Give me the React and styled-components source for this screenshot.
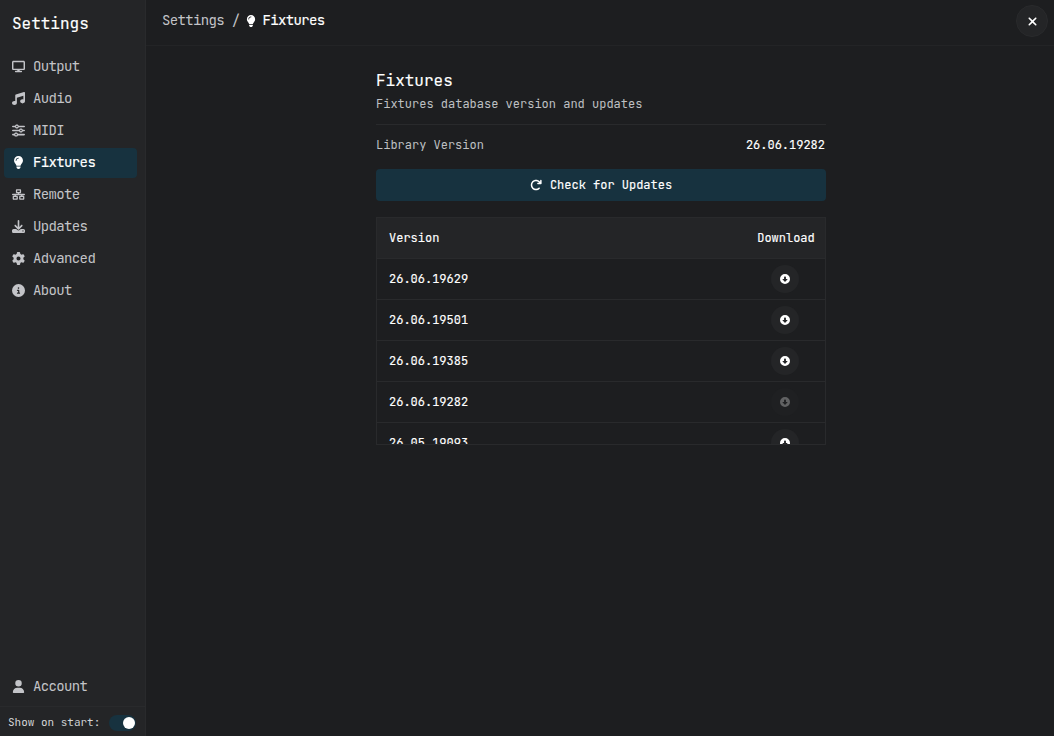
import React from 'react';
import styled, { createGlobalStyle } from 'styled-components';
import {
  FaDisplay, FaMusic, FaSliders, FaLightbulb, FaNetworkWired, FaDownload,
  FaGear, FaCircleInfo, FaUser, FaXmark, FaArrowRotateRight, FaCircleDown,
} from 'react-icons/fa6';

const GlobalStyle = createGlobalStyle`
  * { box-sizing: border-box; }
  body {
    margin: 0;
    background: #1d1e20;
    color: #fff;
    font-family: "JetBrains Mono", "DejaVu Sans Mono", "Liberation Mono", monospace;
    font-size: 12px;
    letter-spacing: -0.01px;
  }
  button { font: inherit; letter-spacing: inherit; color: inherit; border: 0; padding: 0; }
  svg { display: block; flex: none; }
`;

const Layout = styled.div`
  display: flex;
  height: 100vh;
  overflow: hidden;
`;

const Sidebar = styled.aside`
  width: 146px;
  flex: none;
  display: flex;
  flex-direction: column;
  background: #242527;
  border-right: 1px solid #292a2c;
`;

const SidebarTitle = styled.h1`
  margin: 0;
  padding: 13px 12px 0;
  height: 52px;
  font-size: 16px;
  font-weight: 400;
  line-height: 22px;
  -webkit-text-stroke: 0.15px currentColor;
`;

const Nav = styled.nav`
  flex: ${(p) => (p.$grow ? 1 : 'none')};
  display: flex;
  flex-direction: column;
  gap: 2px;
  padding: 0 8px 4px 4px;
`;

const NavItem = styled.button`
  display: flex;
  align-items: center;
  gap: 8px;
  height: 30px;
  padding: 0 8px 2px;
  border-radius: 4px;
  font-size: 14px;
  letter-spacing: -0.63px;
  background: ${(p) => (p.$active ? '#17323f' : 'transparent')};
  color: ${(p) => (p.$active ? '#fff' : '#c3c4c8')};
  -webkit-text-stroke: ${(p) => (p.$active ? '0.15px currentColor' : '0')};
  svg { width: 13px; height: 13px; position: relative; top: 0.5px; }
`;

const SidebarFooter = styled.div`
  display: flex;
  align-items: center;
  justify-content: space-between;
  height: 30px;
  padding: 2px 9px 0 8px;
  border-top: 1px solid #292a2c;
  font-size: 11px;
  line-height: 14px;
  color: #d3d4d6;
`;

const FooterLabel = styled.span`
  padding-bottom: 2px;
`;

const Switch = styled.button`
  display: flex;
  align-items: center;
  justify-content: flex-end;
  width: 27px;
  height: 16px;
  padding: 0 1px;
  border-radius: 8px;
  background: #17323f;
`;

const Knob = styled.span`
  width: 12px;
  height: 12px;
  border-radius: 50%;
  background: #fff;
`;

const Main = styled.main`
  flex: 1;
  display: flex;
  flex-direction: column;
  align-items: center;
`;

const TopBar = styled.header`
  align-self: stretch;
  display: flex;
  justify-content: space-between;
  height: 46px;
  padding: 5px 6px 0 16px;
  border-bottom: 1px solid #232426;
`;

const Breadcrumb = styled.div`
  display: flex;
  align-items: center;
  height: 29px;
  font-size: 14px;
  letter-spacing: -0.65px;
  color: #c3c4c8;
  white-space: pre;
`;

const Crumb = styled.span`
  display: flex;
  align-items: center;
  gap: 6px;
  margin-left: 5px;
  color: #fff;
  -webkit-text-stroke: 0.15px currentColor;
  svg { width: 12px; height: 12px; position: relative; top: 1px; }
`;

const RoundButton = styled.button`
  display: flex;
  align-items: center;
  justify-content: center;
  width: ${(p) => p.$size}px;
  height: ${(p) => p.$size}px;
  border-radius: 50%;
  background: #242527;
  border: ${(p) => (p.$outlined ? '1px solid #292a2c' : '0')};
  opacity: ${(p) => (p.disabled ? 0.3 : 1)};
`;

const Content = styled.section`
  width: 450px;
  margin-left: 2px;
  padding-top: 24px;
`;

const Title = styled.h2`
  margin: 0;
  font-size: 16px;
  font-weight: 400;
  line-height: 22px;
  -webkit-text-stroke: 0.15px currentColor;
`;

const Description = styled.p`
  margin: 0;
  padding: 3px 0 12px;
  height: 33px;
  line-height: 18px;
  letter-spacing: 0;
  color: #bfc0c3;
  border-bottom: 1px solid #292a2c;
`;

const InfoRow = styled.div`
  display: flex;
  align-items: center;
  justify-content: space-between;
  height: 40px;
  color: #bfc0c3;
`;

const Value = styled.span`
  margin-right: 1px;
  color: #fff;
  -webkit-text-stroke: 0.15px currentColor;
`;

const UpdateButton = styled.button`
  display: flex;
  align-items: center;
  justify-content: center;
  gap: 8px;
  width: 100%;
  height: 32px;
  margin: 4px 0 16px;
  border-radius: 4px;
  background: #17323f;
  -webkit-text-stroke: 0.15px currentColor;
`;

const VersionList = styled.div`
  height: 228px;
  border: 1px solid #292a2c;
  overflow: hidden;
`;

const Row = styled.div`
  display: grid;
  grid-template-columns: 1fr ${(p) => (p.$head ? 78 : 80)}px;
  align-items: center;
  height: 41px;
  padding-left: 12px;
  background: ${(p) => (p.$head ? '#242527' : 'transparent')};
  border-bottom: 1px solid #292a2c;
  -webkit-text-stroke: 0.15px currentColor;
`;

const ActionCell = styled.div`
  display: flex;
  justify-content: center;
`;

const navItems = [
  ['Output', FaDisplay],
  ['Audio', FaMusic],
  ['MIDI', FaSliders],
  ['Fixtures', FaLightbulb],
  ['Remote', FaNetworkWired],
  ['Updates', FaDownload],
  ['Advanced', FaGear],
  ['About', FaCircleInfo],
];

const installed = '26.06.19282';
const versions = ['26.06.19629', '26.06.19501', '26.06.19385', '26.06.19282', '26.05.19093'];

export default function App() {
  return (
    <Layout>
      <GlobalStyle />
      <Sidebar>
        <SidebarTitle>Settings</SidebarTitle>
        <Nav $grow>
          {navItems.map(([label, Icon]) => (
            <NavItem key={label} $active={label === 'Fixtures'}>
              <Icon />
              {label}
            </NavItem>
          ))}
        </Nav>
        <Nav>
          <NavItem>
            <FaUser />
            Account
          </NavItem>
        </Nav>
        <SidebarFooter>
          <FooterLabel>Show on start:</FooterLabel>
          <Switch role="switch" aria-checked="true"><Knob /></Switch>
        </SidebarFooter>
      </Sidebar>
      <Main>
        <TopBar>
          <Breadcrumb>
            Settings /
            <Crumb><FaLightbulb />Fixtures</Crumb>
          </Breadcrumb>
          <RoundButton $size={32} $outlined><FaXmark size={13} /></RoundButton>
        </TopBar>
        <Content>
          <Title>Fixtures</Title>
          <Description>Fixtures database version and updates</Description>
          <InfoRow>
            Library Version
            <Value>{installed}</Value>
          </InfoRow>
          <UpdateButton>
            <FaArrowRotateRight size={12} />
            Check for Updates
          </UpdateButton>
          <VersionList>
            <Row $head>
              <span>Version</span>
              <ActionCell>Download</ActionCell>
            </Row>
            {versions.map((v) => (
              <Row key={v}>
                <span>{v}</span>
                <ActionCell>
                  <RoundButton $size={28} disabled={v === installed}>
                    <FaCircleDown size={10} />
                  </RoundButton>
                </ActionCell>
              </Row>
            ))}
          </VersionList>
        </Content>
      </Main>
    </Layout>
  );
}
